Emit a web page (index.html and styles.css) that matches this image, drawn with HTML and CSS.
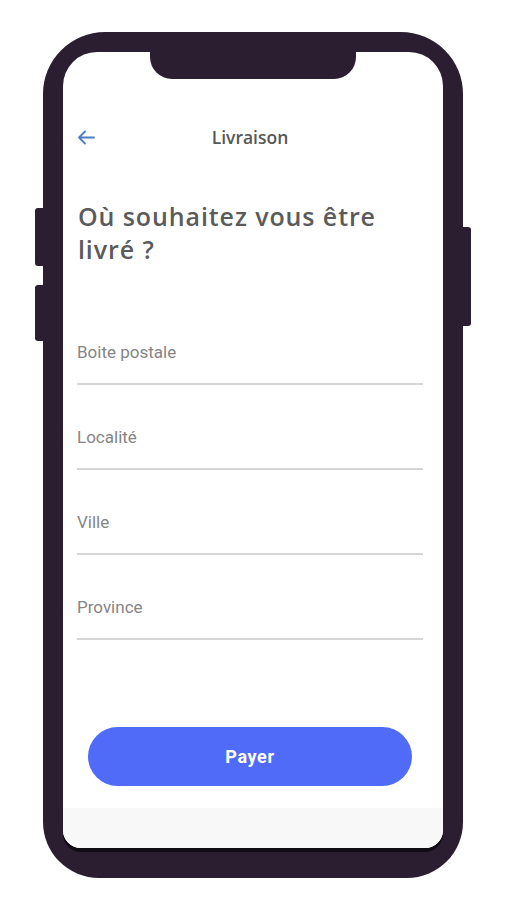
FILE: index.html
```html
<!DOCTYPE html>
<html lang="fr">
<head>
<meta charset="UTF-8" />
<meta name="viewport" content="width=device-width, initial-scale=1.0" />
<title>Livraison</title>
<link rel="stylesheet" href="styles.css">
</head>
<body>
<div class="device">
    <!-- volume keys -->
    <div class="side side-left">
        <span class="key key-up"></span>
        <span class="key key-down"></span>
    </div>

    <div class="frame">
        <div class="screen">
            <div class="notch"></div>

            <header class="topbar">
                <button class="back" aria-label="Retour">
                    <svg width="18" height="15" viewBox="0 0 18 15" fill="none" stroke="#4a7fc4" stroke-width="1.8" stroke-linecap="round" stroke-linejoin="round">
                        <path d="M17 7.5H2M8 1.5L2 7.5l6 6"/>
                    </svg>
                </button>
                <h2 class="title">Livraison</h2>
            </header>

            <h1 class="question">Où souhaitez vous être livré ?</h1>

            <form class="fields">
                <div class="field"><label>Boite postale</label></div>
                <div class="field"><label>Localité</label></div>
                <div class="field"><label>Ville</label></div>
                <div class="field"><label>Province</label></div>
            </form>

            <button class="pay">Payer</button>

            <div class="navbar"></div>
        </div>
    </div>

    <div class="side side-right">
        <span class="key key-power"></span>
    </div>
</div>
</body>
</html>
```

FILE: styles.css
```css
:root{
    --frame:#2b1e30;
    --accent:#4f6bf8;
    --text:#575757;
    --muted:#858585;
    --line:#d6d6d6;
}
body{
    margin:0;
    background:#fff;
    font-family:Roboto,"Liberation Sans",sans-serif;
}

/* ── Device ── */
.device{display:flex;align-items:flex-start;padding:32px 0 0 35px}
.side{width:8px;display:flex;flex-direction:column}
.side-left{padding-top:176px;gap:19px}
.side-right{padding-top:195px}
.key{display:block;background:var(--frame)}
.side-left .key{border-radius:3px 0 0 3px}
.key-up{height:58px}
.key-down{height:56px}
.key-power{height:99px;border-radius:0 3px 3px 0}

.frame{
    width:420px;
    height:846px;
    box-sizing:border-box;
    padding:20px 20px 30px;
    background:var(--frame);
    border-radius:62px 62px 56px 56px;
}
.screen{
    height:796px;
    background:#fff;
    border-radius:34px 34px 18px 18px;
    overflow:hidden;
    display:flex;
    flex-direction:column;
    box-shadow:0 4px 0 #120c15;
}
.notch{
    width:206px;
    height:27px;
    margin:0 auto;
    flex:none;
    background:var(--frame);
    border-radius:0 0 22px 22px;
}

/* ── Header ── */
.topbar{
    position:relative;
    display:flex;
    align-items:center;
    justify-content:center;
    height:24px;
    margin-top:46px;
}
.back{
    position:absolute;
    left:14px;
    top:5px;
    padding:0;
    border:0;
    background:none;
    line-height:0;
}
.title{
    margin:0 0 0 -6px;
    font-family:"Open Sans",Lato,sans-serif;
    font-size:17.5px;
    font-weight:600;
    color:var(--text);
}

.question{
    max-width:320px;
    margin:51px 20px 0 15px;
    font-family:"Open Sans",Lato,sans-serif;
    font-size:25px;
    font-weight:600;
    line-height:33px;
    color:#5b5b5b;
    letter-spacing:.9px;
}

/* ── Form ── */
.fields{margin:34px 20px 0 14px}
.field{
    padding:42px 0 21px;
    border-bottom:2px solid var(--line);
}
.field label{
    display:block;
    font-size:17px;
    line-height:20px;
    color:var(--muted);
}

.pay{
    margin:87px 31px 0 25px;
    height:59px;
    border:0;
    border-radius:30px;
    background:var(--accent);
    color:#fff;
    font-family:Roboto,sans-serif;
    font-size:18px;
    font-weight:700;
    letter-spacing:.6px;
}

.navbar{margin-top:auto;height:40px;background:#f8f8f8}
```
